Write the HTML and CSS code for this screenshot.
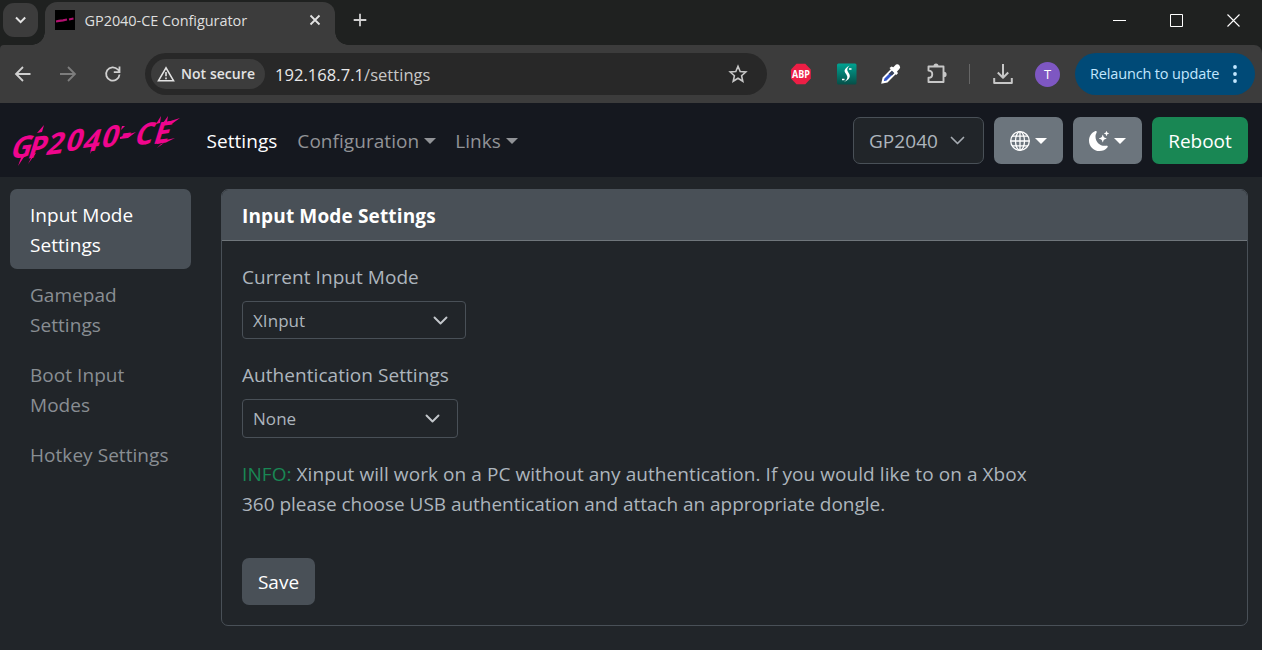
FILE: index.html
```html
<!DOCTYPE html>
<html lang="en">
<head>
<meta charset="utf-8">
<title>GP2040-CE Configurator</title>
<link rel="stylesheet" href="styles.css">
</head>
<body>
<div class="browser">
  <header class="tabstrip">
    <button class="tab-search" aria-label="Search tabs">
      <svg width="35" height="34" viewBox="0 0 35 34"><path d="M13 14.5l4.6 4.6 4.6-4.6" fill="none" stroke="#e3e3e3" stroke-width="2"/></svg>
    </button>
    <div class="tab">
      <svg class="favicon" width="20" height="20" viewBox="0 0 20 20"><rect width="20" height="20"/><path d="M1 11.500l3-.6 4-.6 4-.8M14 9.500l4.500-1" fill="none" stroke="#b3106f" stroke-width="2.200"/></svg>
      <span class="tab-title">GP2040-CE Configurator</span>
      <svg width="12" height="12" viewBox="0 0 12 12"><path d="M1.500 1.500l9 9m0-9l-9 9" stroke="#e3e3e3" stroke-width="1.800"/></svg>
    </div>
    <svg class="new-tab" width="14" height="14" viewBox="0 0 14 14"><path d="M7 .7v12.600M.7 7h12.600" stroke="#d0d0d0" stroke-width="1.800"/></svg>
    <div class="window-controls">
      <svg width="13" height="13" viewBox="0 0 13 13"><path d="M0 6.500h13" stroke="#fff"/></svg>
      <svg width="13" height="13" viewBox="0 0 13 13"><path d="M.5.5h12v12H.5z" fill="none" stroke="#fff"/></svg>
      <svg width="13" height="13" viewBox="0 0 13 13"><path d="M.5.5l12 12m0-12l-12 12" stroke="#fff" stroke-width="1.100"/></svg>
    </div>
  </header>

  <div class="toolbar">
    <div class="history">
      <svg width="18" height="18" viewBox="0 0 18 18"><path d="M16.500 9H2.500M9 2L2 9l7 7" fill="none" stroke="#d0d0d0" stroke-width="1.800"/></svg>
      <svg width="18" height="18" viewBox="0 0 18 18"><path d="M1 9h14.500M9 2l7 7-7 7" fill="none" stroke="#7d7d7d" stroke-width="1.800"/></svg>
      <svg width="18" height="18" viewBox="0 0 18 18"><path d="M15.500 9.500A6.700 6.700 0 1 1 13.800 4.500l2 2M15.500 1.500v5.700h-5.700" fill="none" stroke="#d0d0d0" stroke-width="1.800"/></svg>
    </div>
    <div class="omnibox">
      <div class="security">
        <svg width="18" height="16" viewBox="0 0 18 16"><path d="M9 1.800L1.500 14.700h15z" fill="none" stroke="#e3e3e3" stroke-width="1.600"/><path d="M9 6v4.300m0 1.200v1.700" stroke="#e3e3e3" stroke-width="1.600"/></svg>
        <span>Not secure</span>
      </div>
      <span class="url">192.168.7.1<span class="path">/settings</span></span>
      <svg class="bookmark" width="20" height="20" viewBox="0 0 20 20"><path d="M10 2.300l2.200 5.200 5.600.5-4.200 3.700 1.200 5.600-4.800-3-4.800 3 1.200-5.600L2.200 8l5.600-.5z" fill="none" stroke="#c7c7c7" stroke-width="1.600"/></svg>
    </div>
    <div class="extensions">
      <svg width="22" height="22" viewBox="0 0 22 22"><path d="M6.500.8h8.800l5.500 5.700v9l-5.500 5.700H6.500L1 15.500v-9z" fill="#ed1e45"/><text class="abp" x="10.900" y="15" textLength="18" lengthAdjust="spacingAndGlyphs">ABP</text></svg>
      <svg width="20" height="22" viewBox="0 0 20 22"><defs><linearGradient id="teal" x2="0" y2="1"><stop stop-color="#00a392"/><stop offset="1" stop-color="#064f48"/></linearGradient></defs><rect y=".5" width="19.500" height="21" rx="1.500" fill="url(#teal)"/><path d="M12.500 2.500C5 7 8 9 9.400 11.500S11 16 7 19.200c6-3 6.700-5.700 5-8.700S9 6.500 12.500 2.500z" fill="#fff"/><path d="M12 6h2.500M5 16.500h2.500" stroke="#fff" stroke-width="1.300"/></svg>
      <svg width="22" height="22" viewBox="0 0 22 22"><path d="M11.500 7L3.500 15l-1 4.500 4.500-1 8-8z" fill="#3155c9" stroke="#fff" stroke-width="2"/><path d="M8.500 11l4-4 2.500 2.500-3 3z" fill="#37435c"/><path d="M9.500 5l2-1.500 1.800.8 2.700-2.800q2-1 3.500 1t-.3 3.700L17 8.500l1 1.700-1.800 1.800z" fill="#fff"/></svg>
      <svg width="22" height="22" viewBox="0 0 22 22"><path d="M2.500 3.500h15v15.500h-15v-4.200c5 0 5-7.200 0-7.200z" fill="none" stroke="#c7c7c7" stroke-width="1.900" stroke-linejoin="round"/><path d="M7.500 3a2.500 2.500 0 0 1 5 0zM18 8.800a2.600 2.600 0 0 1 0 5.200z" fill="#c7c7c7"/></svg>
      <span class="divider"></span>
      <svg width="20" height="22" viewBox="0 0 20 22"><path d="M10 1v13M4.800 9.500L10 14.700l5.200-5.200M1.200 15v5h17.600v-5" fill="none" stroke="#c7c7c7" stroke-width="2" stroke-linejoin="round"/></svg>
      <span class="avatar">T</span>
    </div>
    <button class="relaunch"><span>Relaunch to update</span>
      <svg width="4" height="18" viewBox="0 0 4 18"><g fill="#c2e7ff"><circle cx="2" cy="2" r="1.900"/><circle cx="2" cy="9" r="1.900"/><circle cx="2" cy="16" r="1.900"/></g></svg>
    </button>
  </div>
</div>

<nav class="navbar">
  <svg class="logo" width="174" height="60" viewBox="0 0 174 60" role="img" aria-label="GP2040-CE">
    <text class="logo-text" transform="translate(2 48) skewY(-7.500) skewX(-18)" x="0 18 36 55 73 91 110 125 144" y="0 2 1 0 3 1 -1 3 4">GP2040-CE</text>
    <path d="M15 44l-4 11 8-12zM26 43l-5 10 8-11zM37 14l-7 8 5-1zM85 35l-2 8 5-9zM118 15l-4 4 1-4zM154 5l-5 8 4-1zM161 5l-5 7 4-1zM154 33l-4 4 7-5z" fill="#f0058d"/>
    <path d="M154 13l19-6-7 5-12 3zM150 31l18-4-8 4-10 2zM113 26l16-5-8 6-8 1z" fill="#f0058d"/>
  </svg>
  <div class="nav-links">
    <a class="active">Settings</a>
    <a class="dropdown config">Configuration</a>
    <a class="dropdown">Links</a>
  </div>
  <div class="nav-actions">
    <div class="profile"><span>GP2040</span><svg width="15" height="9" viewBox="0 0 15 9"><path d="M1.500 1.500l6 6 6-6" fill="none" stroke="#a5abb1" stroke-width="1.700" stroke-linecap="round" stroke-linejoin="round"/></svg></div>
    <button class="icon-button dropdown" aria-label="Language">
      <svg width="20" height="20" viewBox="0 0 20 20"><g fill="none" stroke="#fff" stroke-width="1.300"><circle cx="10" cy="10" r="9.300"/><ellipse cx="10" cy="10" rx="4.500" ry="9.300"/><path d="M10 .7v18.600M.7 10h18.600M2 5.200h16M2 14.800h16"/></g></svg>
    </button>
    <button class="icon-button dropdown" aria-label="Theme">
      <svg width="20" height="20" viewBox="0 0 16 16"><g fill="#fff"><path d="M6 .278a.77.77 0 0 1 .08.858 7.200 7.200 0 0 0-.878 3.460c0 4.021 3.278 7.277 7.318 7.277q.792-.001 1.533-.16a.79.79 0 0 1 .81.316.73.73 0 0 1-.031.893A8.350 8.350 0 0 1 8.344 16C3.734 16 0 12.286 0 7.710 0 4.266 2.114 1.312 5.124.06A.75.75 0 0 1 6 .278"/><path d="M10.794 3.148a.217.217 0 0 1 .412 0l.387 1.162c.173.518.579.924 1.097 1.097l1.162.387a.217.217 0 0 1 0 .412l-1.162.387a1.730 1.730 0 0 0-1.097 1.097l-.387 1.162a.217.217 0 0 1-.412 0l-.387-1.162A1.730 1.730 0 0 0 9.310 6.593l-1.162-.387a.217.217 0 0 1 0-.412l1.162-.387a1.730 1.730 0 0 0 1.097-1.097zM13.863.099a.145.145 0 0 1 .274 0l.258.774c.115.346.386.617.732.732l.774.258a.145.145 0 0 1 0 .274l-.774.258a1.160 1.160 0 0 0-.732.732l-.258.774a.145.145 0 0 1-.274 0l-.258-.774a1.160 1.160 0 0 0-.732-.732l-.774-.258a.145.145 0 0 1 0-.274l.774-.258c.346-.115.617-.386.732-.732z"/></g></svg>
    </button>
    <button class="reboot">Reboot</button>
  </div>
</nav>

<main class="layout">
  <aside class="sidebar">
    <a class="selected">Input Mode Settings</a>
    <a>Gamepad Settings</a>
    <a>Boot Input Modes</a>
    <a>Hotkey Settings</a>
  </aside>
  <section class="card">
    <h1>Input Mode Settings</h1>
    <div class="card-body">
      <label>Current Input Mode</label>
      <div class="select select-mode"><span>XInput</span><svg width="15" height="9" viewBox="0 0 15 9"><path d="M1.500 1.500l6 6 6-6" fill="none" stroke="#c3c7cb" stroke-width="1.900" stroke-linecap="round" stroke-linejoin="round"/></svg></div>
      <label>Authentication Settings</label>
      <div class="select select-auth"><span>None</span><svg width="15" height="9" viewBox="0 0 15 9"><path d="M1.500 1.500l6 6 6-6" fill="none" stroke="#c3c7cb" stroke-width="1.900" stroke-linecap="round" stroke-linejoin="round"/></svg></div>
      <p class="info"><span class="first-line"><span class="success">INFO:</span> Xinput will work on a PC without any authentication. If you would like to on a Xbox</span><br><span class="second-line">360 please choose USB authentication and attach an appropriate dongle.</span></p>
      <button class="save">Save</button>
    </div>
  </section>
</main>
</body>
</html>
```
FILE: styles.css
```css
* { box-sizing: border-box; }
body {
  margin: 0;
  height: 650px;
  overflow: hidden;
  background: #212529;
  color: #adb5bd;
  font: 19px/30px "Open Sans", "Noto Sans", sans-serif;
  letter-spacing: .05px;
}
button { border: 0; padding: 0; font: inherit; color: inherit; }
svg { display: block; flex: none; }
span, a, label, button { white-space: nowrap; }

.browser { height: 104px; background: #1f2120; border-bottom: 1px solid #15181f; }
.tabstrip { display: flex; height: 45px; padding-left: 3px; }
.tab-search { width: 35px; height: 34px; margin-top: 3px; border-radius: 11px; background: #3c3c3c; }
.tab {
  position: relative;
  display: flex;
  align-items: center;
  width: 290px;
  height: 43px;
  margin: 2px 0 0 7px;
  padding: 0 14px 7px 10px;
  border-radius: 12px 12px 0 0;
  background: #3c3c3c;
}
.tab::before, .tab::after {
  content: "";
  position: absolute;
  bottom: 0;
  width: 13px;
  height: 13px;
}
.tab::before { left: -13px; background: radial-gradient(circle at 0 0, transparent 12.500px, #3c3c3c 13px); }
.tab::after { right: -13px; background: radial-gradient(circle at 100% 0, transparent 12.500px, #3c3c3c 13px); }
.tab-title { flex: 1; margin-left: 9.500px; padding-top: 1px; font-size: 14.500px; line-height: 20px; letter-spacing: -.06px; color: #dfdfdf; }
.new-tab { margin: 13px 0 0 18px; }
.window-controls { display: flex; gap: 44px; margin: 14px 22px 0 auto; }

.toolbar { display: flex; align-items: center; height: 58px; padding-right: 7px; border-radius: 4px 8px 0 0; background: #3c3c3c; }
.toolbar > * { flex: none; }
.history { display: flex; gap: 27px; width: 145px; padding-left: 14px; }
.omnibox { display: flex; align-items: center; width: 622px; height: 42px; padding: 0 19px 0 6px; border-radius: 21px; background: #282828; }
.security {
  display: flex;
  align-items: center;
  gap: 6px;
  width: 114px;
  height: 30px;
  padding-left: 6px;
  border-radius: 15px;
  background: #3c3c3c;
  color: #e3e3e3;
  font-size: 14px;
  font-weight: 600;
}
.url { margin-left: 10px; padding-top: 1px; font-size: 16.500px; color: #e8e8e8; }
.path { color: #c7c7c7; }
.bookmark { margin-left: auto; }
.extensions { display: flex; align-items: center; width: 285.500px; margin-left: 22.500px; }
.extensions > :nth-child(2) { margin-left: 25px; }
.extensions > :nth-child(3) { margin-left: 23px; }
.extensions > :nth-child(4) { margin-left: 24px; }
.abp { font: 700 10.500px "Open Sans", sans-serif; fill: #fff; text-anchor: middle; }
.divider { width: 1px; height: 20px; margin: 0 23px 0 21px; background: #666; }
.avatar { width: 25px; height: 25px; margin-left: 22.500px; border-radius: 50%; background: #7e57c2; color: #fff; font-size: 13px; line-height: 25px; text-align: center; }
.relaunch {
  display: flex;
  align-items: center;
  justify-content: space-between;
  width: 180px;
  height: 42px;
  padding: 0 18px 0 15px;
  border-radius: 21px;
  background: #004a77;
  color: #c2e7ff;
  font-size: 14.500px;
  letter-spacing: -.15px;
}

.navbar { display: flex; align-items: center; height: 73px; padding: 0 14px 0 7px; background: #15181f; }
.logo { overflow: visible; }
.logo-text { font: 700 29px "Open Sans", sans-serif; fill: #f0058d; }
.nav-links { display: flex; gap: 20px; margin-left: 25.500px; color: #919397; }
.nav-links .active { color: #fff; }
.nav-links .config { margin-right: -1px; }
.dropdown { display: flex; align-items: center; }
.dropdown::after { content: ""; margin-left: 5px; border: 6px solid transparent; border-top-color: currentColor; border-bottom: 0; }
.nav-actions { display: flex; gap: 10px; height: 47px; margin-left: auto; }
.profile { display: flex; align-items: center; justify-content: space-between; width: 131px; padding: 0 18px 0 15px; border: 1px solid #495057; border-radius: 7px; background: #212529; }
.icon-button { justify-content: center; width: 69px; border-radius: 7px; background: #6c757d; color: #fff; }
.reboot { width: 96px; border-radius: 7px; background: #198754; color: #fff; }

.layout { display: flex; gap: 30px; padding: 12px 14px 0 10px; }
.sidebar { width: 181px; flex: none; color: #898e93; }
.sidebar a { display: block; padding: 11px 20px 9px; white-space: normal; }
.sidebar .selected { height: 80px; border-radius: 7px; background: #495057; color: #fff; }
.card { flex: 1; height: 437px; border: 1px solid #495057; border-radius: 7px; overflow: hidden; }
.card h1 { height: 51px; margin: 0; padding: 11px 20px 0; border-bottom: 1px solid #70767b; background: #495057; color: #fff; font-size: 19px; line-height: 30px; letter-spacing: .15px; }
.card-body { display: flex; flex-direction: column; align-items: flex-start; padding: 21px 20px 0; }
.select { display: flex; align-items: center; justify-content: space-between; padding: 0 17px 0 10px; border: 1px solid #495057; border-radius: 4px; font-size: 17px; }
.select-mode { width: 224px; height: 38px; margin: 9px 0 21px; }
.select-mode span { padding-top: 1px; }
.select-auth { width: 216px; height: 39px; margin: 9px 0 21px; }
.info { margin: 0; white-space: nowrap; }
.first-line { letter-spacing: .07px; }
.second-line { letter-spacing: -.03px; }
.success { color: #198754; }
.save { width: 73px; height: 47px; margin-top: 39px; border-radius: 7px; background: #495057; color: #fff; }
```
